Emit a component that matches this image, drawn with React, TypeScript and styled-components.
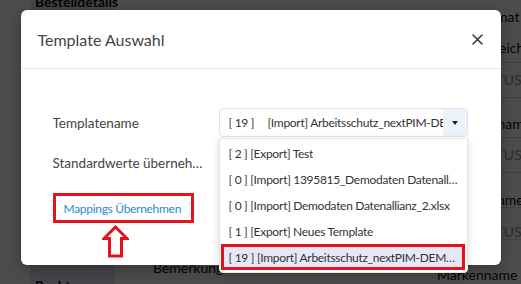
import React from "react";
import styled, { createGlobalStyle } from "styled-components";

const GlobalStyle = createGlobalStyle`
  html, body {
    margin: 0;
    padding: 0;
    width: 521px;
    height: 284px;
    overflow: hidden;
    font-family: Lato, "Noto Sans", Arial, sans-serif;
  }
`;

const Page = styled.div`
  position: relative;
  width: 521px;
  height: 284px;
  overflow: hidden;
  display: grid;
  grid-template-columns: 30px 85px minmax(0, 1fr) 91px;
  background: #ffffff;
  color: #111;
  font-size: 14px;
`;

const SidePanel = styled.div`
  display: flex;
  flex-direction: column;
  justify-content: space-between;
  background: #dfe8f0;
  padding: 0 5px;
`;

const SideTitle = styled.div`
  font-weight: 700;
  line-height: 16px;
  margin-top: -6px;
`;

const SideBottom = styled.div`
  font-weight: 700;
  line-height: 16px;
  margin-bottom: -10px;
`;

const Middle = styled.div`
  display: flex;
  flex-direction: column;
  justify-content: flex-end;
  padding: 0 0 8px 38px;
`;

const RightCol = styled.div`
  display: flex;
  flex-direction: column;
  padding-left: 7px;
  white-space: nowrap;
  min-width: 0;
  overflow: hidden;
`;

const RightRow = styled.div<{ $h: number; $top: number; $line?: boolean; $muted?: boolean }>`
  height: ${(p) => p.$h}px;
  flex-shrink: 0;
  box-sizing: border-box;
  padding-top: ${(p) => p.$top}px;
  line-height: 16px;
  border-bottom: ${(p) => (p.$line ? "1px solid #d9d9d9" : "none")};
  color: ${(p) => (p.$muted ? "#9a9a9a" : "#111")};
  margin-left: ${(p) => (p.$muted ? "-7px" : "0")};
  padding-left: ${(p) => (p.$muted ? "7px" : "0")};
`;

const Backdrop = styled.div`
  position: absolute;
  inset: 0;
  background: rgba(0, 0, 0, 0.7);
  display: flex;
  justify-content: center;
  align-items: flex-start;
  padding-top: 10px;
`;

const Modal = styled.div`
  width: 480px;
  height: 255px;
  background: #fff;
  border-radius: 6px;
  box-shadow: 0 4px 14px rgba(0, 0, 0, 0.3);
  display: flex;
  flex-direction: column;
  color: #444;
`;

const Header = styled.div`
  height: 58px;
  flex-shrink: 0;
  display: flex;
  align-items: center;
  justify-content: space-between;
  padding: 0 17px;
  border-bottom: 1px solid #e6e6e6;
`;

const Title = styled.div`
  font-size: 16px;
  color: #444;
`;

const CloseButton = styled.button`
  border: none;
  background: none;
  padding: 0;
  width: 11px;
  height: 11px;
  margin-right: 1px;
  display: flex;
  cursor: pointer;
`;

const Body = styled.div`
  padding: 39px 33px 0 32px;
  display: flex;
  flex-direction: column;
`;

const FormRow = styled.div<{ $mt?: number }>`
  display: grid;
  grid-template-columns: 166px minmax(0, 1fr);
  align-items: center;
  height: 29px;
  margin-top: ${(p) => p.$mt ?? 0}px;
`;

const Label = styled.div`
  font-size: 13.5px;
  color: #444;
  white-space: nowrap;
  overflow: hidden;
  text-overflow: ellipsis;
  padding-right: 6px;
`;

const SelectWrap = styled.div`
  position: relative;
  height: 29px;
  min-width: 0;
`;

const SelectBox = styled.div`
  height: 29px;
  box-sizing: border-box;
  border: 1px solid #e2e2e2;
  border-radius: 4px;
  display: flex;
  align-items: center;
  overflow: hidden;
  font-size: 12px;
  letter-spacing: -0.3px;
  color: #333;
`;

const SelectId = styled.span`
  width: 39px;
  padding-left: 9px;
  flex-shrink: 0;
  white-space: pre;
`;

const SelectText = styled.span`
  flex: 1;
  min-width: 0;
  white-space: nowrap;
  overflow: hidden;
`;

const Toggle = styled.div`
  width: 24px;
  height: 100%;
  background: #eaf3fc;
  display: flex;
  align-items: center;
  justify-content: center;
  flex-shrink: 0;
`;

const Caret = styled.span`
  width: 0;
  height: 0;
  border-left: 3.5px solid transparent;
  border-right: 3.5px solid transparent;
  border-top: 4px solid #222;
`;

const Menu = styled.ul`
  position: absolute;
  top: 30px;
  left: 0;
  right: 0;
  margin: 0;
  padding: 1px 0 2px;
  list-style: none;
  background: #fff;
  border: 1px solid #e6e6e6;
  border-radius: 0 0 4px 4px;
  box-shadow: 0 3px 8px rgba(0, 0, 0, 0.15);
  z-index: 2;
`;

const MenuItem = styled.li<{ $active?: boolean }>`
  height: 26px;
  box-sizing: border-box;
  display: flex;
  align-items: center;
  padding: 0 8px 0 ${(p) => (p.$active ? "8px" : "9px")};
  margin: ${(p) => (p.$active ? "0 2px 0 1px" : "0")};
  font-size: 12px;
  letter-spacing: -0.3px;
  color: #333;
  white-space: pre;
  overflow: hidden;
  background: ${(p) => (p.$active ? "#e7e7f8" : "transparent")};
  outline: ${(p) => (p.$active ? "3px solid #e3121b" : "none")};
  outline-offset: -3px;
  span {
    overflow: hidden;
    text-overflow: ellipsis;
  }
`;

const LinkBox = styled.div`
  margin-top: 16px;
  width: 141px;
  height: 30px;
  box-sizing: border-box;
  border: 3px solid #e3121b;
  display: flex;
  align-items: center;
  padding-left: 8px;
`;

const Link = styled.a`
  font-size: 12px;
  letter-spacing: -0.3px;
  color: #2b8ad0;
  text-decoration: none;
  white-space: nowrap;
  cursor: pointer;
`;

const ArrowWrap = styled.div`
  margin: 2px 0 0 49px;
  display: flex;
`;

const items = [
  "[ 2 ] [Export] Test",
  "[ 0 ] [Import] 1395815_Demodaten Datenallianz_1.xlsx",
  "[ 0 ] [Import] Demodaten Datenallianz_2.xlsx",
  "[ 1 ] [Export] Neues Template",
  "[ 19 ] [Import] Arbeitsschutz_nextPIM-DEMO_Template.xlsx",
];

const rightRows = [
  { h: 34, top: 9, text: "Bestellformat" },
  { h: 29, top: 6, text: "Artikelbezeichnung", line: true },
  { h: 35, top: 9, text: "PRODUCTUS", line: true, muted: true },
  { h: 40, top: 18, text: "Herstellername", line: true },
  { h: 35, top: 9, text: "PRODUCTUS", line: true, muted: true },
  { h: 35, top: 19, text: "Artikelnummer", line: true },
  { h: 32, top: 16, text: "PRODUCTUS", line: true, muted: true },
  { h: 44, top: 27, text: "Markenname" },
];

export default function App() {
  return (
    <>
      <GlobalStyle />
      <Page>
        <div />
        <SidePanel>
          <SideTitle>Bestelldetails</SideTitle>
          <SideBottom>Recht</SideBottom>
        </SidePanel>
        <Middle>Bemerkung</Middle>
        <RightCol>
          {rightRows.map((r, i) => (
            <RightRow key={i} $h={r.h} $top={r.top} $line={r.line} $muted={r.muted}>
              {r.text}
            </RightRow>
          ))}
        </RightCol>

        <Backdrop>
          <Modal>
            <Header>
              <Title>Template Auswahl</Title>
              <CloseButton aria-label="close">
                <svg width="11" height="11" viewBox="0 0 11 11">
                  <path d="M1 1 L10 10 M10 1 L1 10" stroke="#333" strokeWidth="1.5" strokeLinecap="round" />
                </svg>
              </CloseButton>
            </Header>
            <Body>
              <FormRow>
                <Label>Templatename</Label>
                <SelectWrap>
                  <SelectBox>
                    <SelectId>[ 19 ]</SelectId>
                    <SelectText>[Import] Arbeitsschutz_nextPIM-DEMO_Template.xlsx</SelectText>
                    <Toggle>
                      <Caret />
                    </Toggle>
                  </SelectBox>
                  <Menu>
                    {items.map((t, i) => (
                      <MenuItem key={i} $active={i === items.length - 1}>
                        <span>{t}</span>
                      </MenuItem>
                    ))}
                  </Menu>
                </SelectWrap>
              </FormRow>
              <FormRow $mt={11}>
                <Label>Standardwerte übernehmen</Label>
              </FormRow>
              <LinkBox>
                <Link>Mappings Übernehmen</Link>
              </LinkBox>
              <ArrowWrap>
                <svg width="27" height="33" viewBox="0 0 27 33">
                  <path
                    d="M13.5 2 L25 13.5 L19.5 13.5 L19.5 31 L7.5 31 L7.5 13.5 L2 13.5 Z"
                    fill="#fff"
                    stroke="#e3121b"
                    strokeWidth="3"
                    strokeLinejoin="miter"
                  />
                </svg>
              </ArrowWrap>
            </Body>
          </Modal>
        </Backdrop>
      </Page>
    </>
  );
}
